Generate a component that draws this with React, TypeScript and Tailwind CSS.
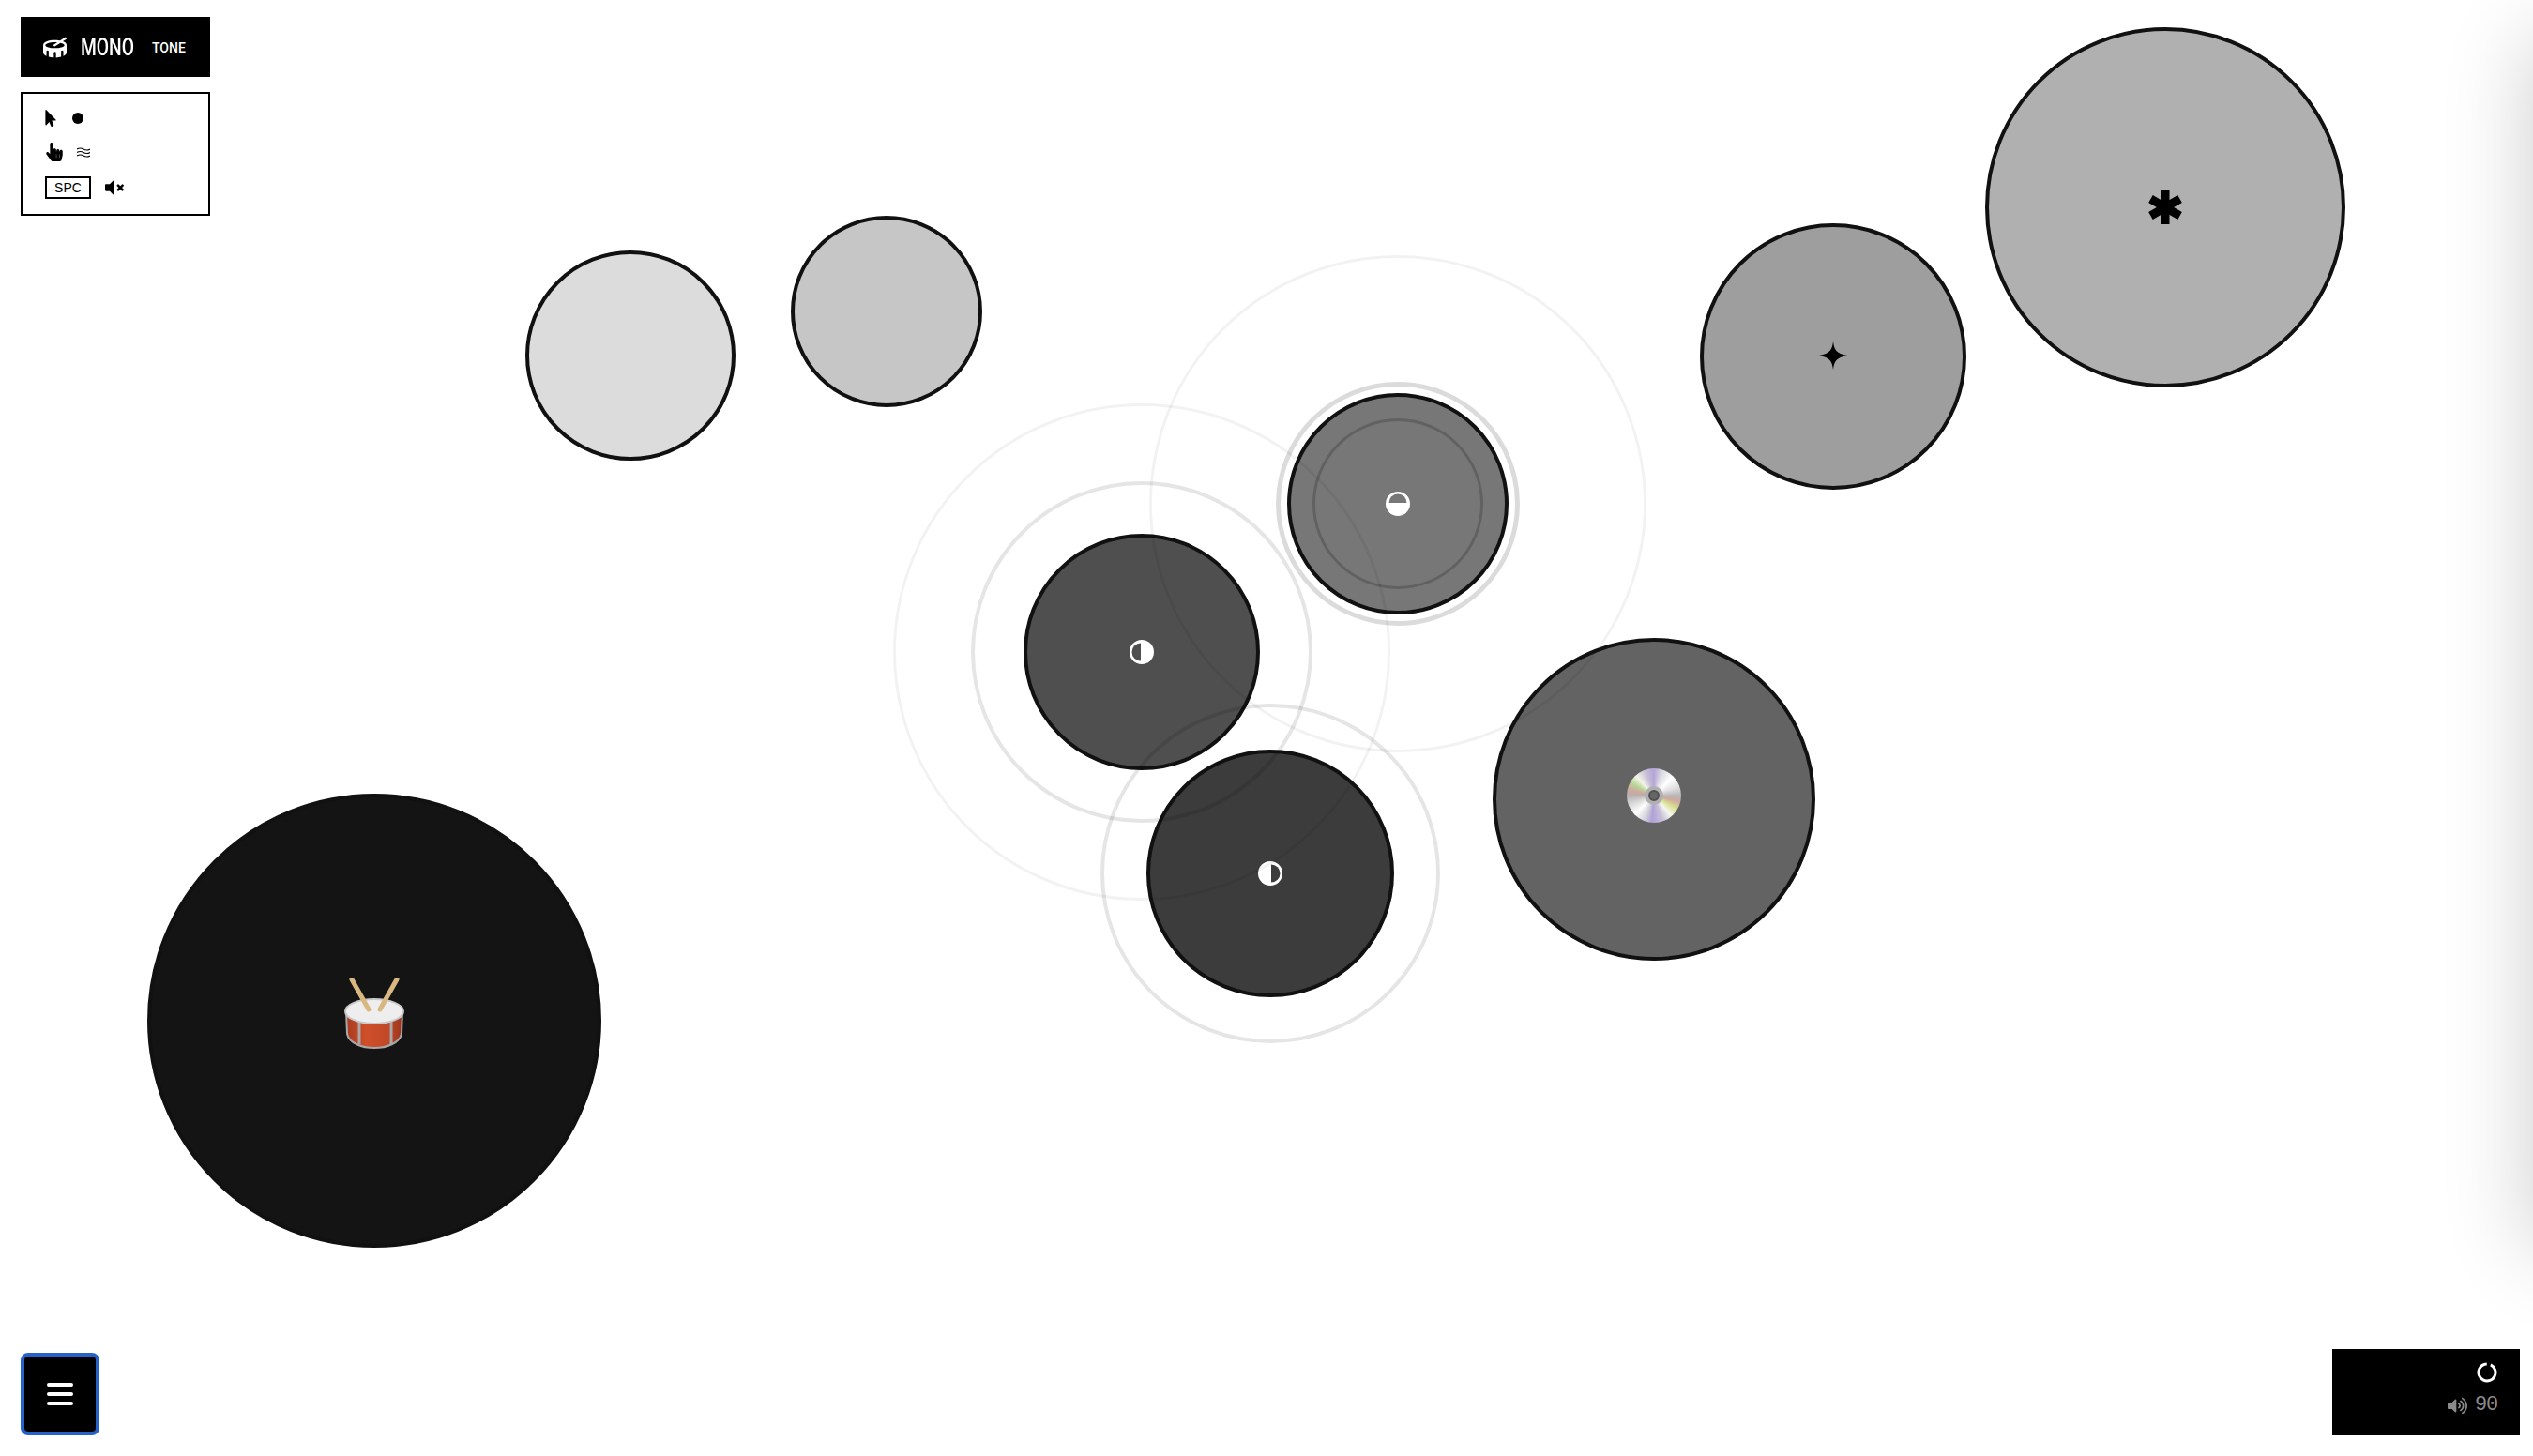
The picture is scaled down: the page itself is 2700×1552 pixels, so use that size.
import { FaDrum, FaHandPointer, FaMousePointer, FaVolumeMute, FaVolumeUp } from 'react-icons/fa';

const pads = [
  { x: 672, y: 379, r: 112, color: '#dcdcdc' },
  { x: 945, y: 332, r: 102, color: '#c6c6c6' },
  { x: 2308, y: 221, r: 192, color: '#b0b0b0', icon: 'asterisk' },
  { x: 1954, y: 380, r: 142, color: '#9e9e9e', icon: 'star' },
  { x: 1763, y: 852, r: 172, color: '#636363', icon: 'disc' },
  { x: 399, y: 1088, r: 242, color: '#141414', icon: 'drum' },
  { x: 1217, y: 695, r: 126, color: '#4f4f4f', icon: 'left' },
  { x: 1354, y: 931, r: 132, color: '#3c3c3c', icon: 'right' },
  { x: 1490, y: 537, r: 118, color: '#777777', icon: 'top' },
];

// ripple rings spreading from the active pads
const rings = [
  { x: 1217, y: 695, r: 182, w: 4, color: 'rgba(0,0,0,0.1)' },
  { x: 1217, y: 695, r: 265, w: 3, color: 'rgba(0,0,0,0.05)' },
  { x: 1354, y: 931, r: 181, w: 4, color: 'rgba(0,0,0,0.1)' },
  { x: 1490, y: 537, r: 130, w: 5, color: 'rgba(0,0,0,0.14)' },
  { x: 1490, y: 537, r: 265, w: 3, color: 'rgba(0,0,0,0.05)' },
  { x: 1490, y: 537, r: 91, w: 3, color: 'rgba(0,0,0,0.18)' },
];

const HalfCircle = ({ dir, bg }: { dir: 'left' | 'right' | 'top'; bg: string }) => (
  <svg width="28" height="28" viewBox="0 0 28 28">
    <circle cx="14" cy="14" r="13" fill="#fff" />
    {dir === 'left' && <path d="M13 4.5 A9.5 9.5 0 0 0 13 23.5 Z" fill={bg} />}
    {dir === 'right' && <path d="M15 4.5 A9.5 9.5 0 0 1 15 23.5 Z" fill={bg} />}
    {dir === 'top' && <path d="M4.5 13 A9.5 9.5 0 0 1 23.5 13 Z" fill={bg} />}
  </svg>
);

const Asterisk = () => (
  <svg width="38" height="38" viewBox="0 0 38 38" fill="#000">
    <rect x="14.5" y="1" width="9" height="36" />
    <rect x="14.5" y="1" width="9" height="36" transform="rotate(60 19 19)" />
    <rect x="14.5" y="1" width="9" height="36" transform="rotate(120 19 19)" />
  </svg>
);

const Star = () => (
  <svg className="mb-[2px]" width="30" height="30" viewBox="0 0 28 28" fill="#000">
    <path d="M14 0 C15 8 17 12 28 14 C17 16 15 20 14 28 C13 20 11 16 0 14 C11 12 13 8 14 0 Z" />
  </svg>
);

const Disc = () => (
  <div className="mb-[8px] flex h-[58px] w-[58px] items-center justify-center rounded-full bg-[conic-gradient(#b4a4d8_0deg,#d8d8e0_18deg,#ffffff_45deg,#e0e0e0_70deg,#b8b8b8_90deg,#d0a8a0_103deg,#d8e090_120deg,#f6f6f0_140deg,#c8c0d8_160deg,#b0a0d8_185deg,#d0d0d8_200deg,#ffffff_225deg,#d8d8d8_250deg,#b8b0b0_270deg,#d0a8a0_283deg,#b8d898_300deg,#f4f4e8_318deg,#c8c0d8_340deg,#b4a4d8_360deg)] blur-[0.6px]">
    <div className="flex h-[20px] w-[20px] items-center justify-center rounded-full bg-[#b0b0b0]">
      <div className="h-[12px] w-[12px] rounded-full border-2 border-[#505050] bg-[#666]" />
    </div>
  </div>
);

const DrumEmoji = () => (
  <svg className="mb-[16px] blur-[0.6px]" width="66" height="76" viewBox="0 0 66 76">
    <defs>
      <linearGradient id="shell" x1="0" x2="1" y1="0" y2="0">
        <stop offset="0" stopColor="#a83a20" />
        <stop offset="0.35" stopColor="#cf4f2a" />
        <stop offset="0.75" stopColor="#c04826" />
        <stop offset="1" stopColor="#9a341c" />
      </linearGradient>
    </defs>
    <path d="M3 36 L4 60 C6 70 20 75 33 75 C46 75 60 70 62 60 L63 36 Z" fill="url(#shell)" stroke="#a8a8a8" strokeWidth="2" />
    <path d="M17 46 V71 M51 46 V71" stroke="#a8a8a8" strokeWidth="3" />
    <ellipse cx="33" cy="36" rx="31" ry="13" fill="#eeeeee" stroke="#c8c8c8" strokeWidth="2" />
    <path d="M9 2 L27 34" stroke="#d8b880" strokeWidth="5" strokeLinecap="round" />
    <path d="M57 2 L39 34" stroke="#d8b880" strokeWidth="5" strokeLinecap="round" />
  </svg>
);

const PadIcon = ({ icon, bg }: { icon?: string; bg: string }) => {
  if (icon === 'asterisk') return <Asterisk />;
  if (icon === 'star') return <Star />;
  if (icon === 'disc') return <Disc />;
  if (icon === 'drum') return <DrumEmoji />;
  if (icon === 'left' || icon === 'right' || icon === 'top') return <HalfCircle dir={icon} bg={bg} />;
  return null;
};

export default function App() {
  return (
    <div className="relative h-screen w-full overflow-hidden bg-white font-['Liberation_Sans',sans-serif]">
      {pads.map((p) => (
        <div
          key={p.x}
          className="absolute flex items-center justify-center rounded-full border-[4px] border-[#111]"
          style={{ left: p.x - p.r, top: p.y - p.r, width: p.r * 2, height: p.r * 2, backgroundColor: p.color }}
        >
          <PadIcon icon={p.icon} bg={p.color} />
        </div>
      ))}

      {rings.map((ring, i) => (
        <div
          key={i}
          className="pointer-events-none absolute rounded-full"
          style={{
            left: ring.x - ring.r,
            top: ring.y - ring.r,
            width: ring.r * 2,
            height: ring.r * 2,
            border: `${ring.w}px solid ${ring.color}`,
          }}
        />
      ))}

      {/* logo + controls legend */}
      <div className="absolute left-[22px] top-[18px] flex w-[202px] flex-col gap-[16px]">
        <div className="flex h-[64px] items-center bg-black pl-[24px] text-white">
          <FaDrum className="text-[25px]" />
          <div className="ml-[15px] w-[58px] pt-[3px]">
            <span className="inline-block origin-left scale-x-[0.77] whitespace-nowrap font-['Roboto',sans-serif] text-[25px] font-medium leading-none">MONO</span>
          </div>
          <span className="ml-[18px] pt-[2px] font-['Roboto',sans-serif] text-[14px] font-medium leading-none">TONE</span>
        </div>
        <div className="flex h-[132px] flex-col gap-[15px] border-2 border-black bg-white pl-[24px] pt-[16px] text-black">
          <div className="flex h-[20px] items-center">
            <FaMousePointer className="ml-[-3px] text-[18px]" />
            <div className="ml-[14px] h-[12px] w-[12px] rounded-full bg-black" />
          </div>
          <div className="flex h-[22px] items-center">
            <FaHandPointer className="text-[20px]" />
            <svg className="ml-[14px]" width="14" height="11" viewBox="0 0 14 11" fill="none" stroke="#000" strokeWidth="1.2">
              <path d="M0 2 Q3.5 0 7 2 T14 2" />
              <path d="M0 5.5 Q3.5 3.5 7 5.5 T14 5.5" />
              <path d="M0 9 Q3.5 7 7 9 T14 9" />
            </svg>
          </div>
          <div className="flex h-[24px] items-center">
            <span className="flex h-[24px] w-[49px] items-center justify-center border-2 border-black text-[14px] leading-none">SPC</span>
            <FaVolumeMute className="ml-[15px] text-[20px]" />
          </div>
        </div>
      </div>

      {/* menu button */}
      <button className="absolute bottom-[22px] left-[22px] flex h-[88px] w-[84px] flex-col items-center justify-center gap-[6px] rounded-[8px] border-4 border-[#2563c8] bg-black">
        <span className="h-[4px] w-[28px] rounded-full bg-white" />
        <span className="h-[4px] w-[28px] rounded-full bg-white" />
        <span className="h-[4px] w-[28px] rounded-full bg-white" />
      </button>

      {/* drawer shadow, the drawer itself sits off screen */}
      <div className="absolute bottom-[220px] right-[-300px] top-[40px] w-[300px] shadow-[0_0_90px_rgba(0,0,0,0.2)]" />

      {/* status box */}
      <div className="absolute bottom-[22px] right-[14px] flex h-[92px] w-[200px] flex-col items-end bg-black pr-[24px] pt-[14px]">
        <svg width="22" height="22" viewBox="0 0 22 22" fill="none">
          <circle cx="11" cy="11" r="9" stroke="#fff" strokeWidth="3" strokeDasharray="52 4.5" transform="rotate(-65 11 11)" />
        </svg>
        <div className="mt-[13px] flex items-center gap-[8px] text-[#8a8a8a]">
          <FaVolumeUp className="text-[21px]" />
          <span className="font-['Liberation_Mono',monospace] text-[22px] leading-none tracking-[-1.2px]">90</span>
        </div>
      </div>
    </div>
  );
}
